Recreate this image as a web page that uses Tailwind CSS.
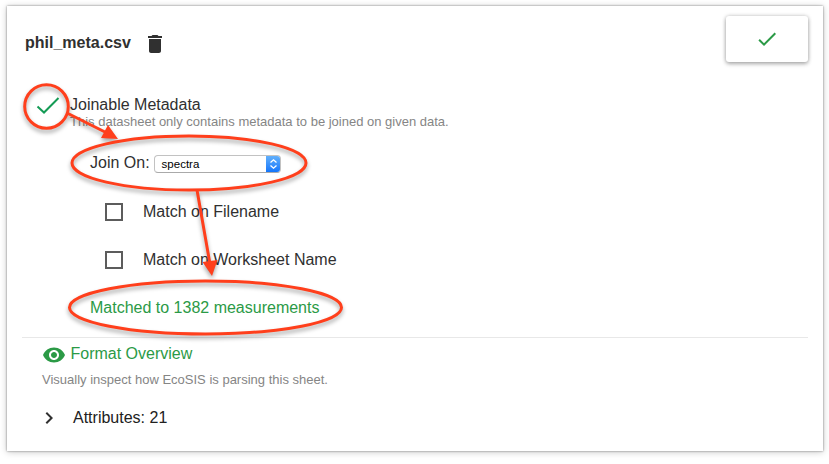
<!DOCTYPE html>
<html lang="en">
<head>
<meta charset="utf-8">
<title>phil_meta.csv</title>
<script src="https://cdn.jsdelivr.net/npm/@tailwindcss/browser@4"></script>
</head>
<body class="relative h-[464px] w-[829px] overflow-hidden bg-white px-[7px] pt-[6px] font-['Liberation_Sans',Arial,sans-serif] text-base text-[#303030]">
<main class="flex h-[445px] w-[816px] flex-col bg-white shadow-[0_0_2px_rgba(0,0,0,0.45),0_1px_7px_rgba(0,0,0,0.22)]">
  <header class="flex h-[87px] items-start pr-[15px] pl-[18px]">
    <h1 class="mt-[25px] text-base leading-6 font-bold">phil_meta.csv</h1>
    <svg class="mt-[26px] ml-[12px] size-6" viewBox="0 0 24 24" fill="#303030"><path d="M6 19c0 1.1.9 2 2 2h8c1.1 0 2-.9 2-2V7H6v12zM19 4h-3.500l-1-1h-5l-1 1H5v2h14V4z"/></svg>
    <button class="mt-[10px] ml-auto flex h-[46px] w-[82px] items-center justify-center rounded-[3px] bg-white shadow-[0_2px_4px_rgba(0,0,0,0.28),0_0_4px_rgba(0,0,0,0.2)]">
      <svg class="size-6" viewBox="0 0 24 24" fill="#2b9a46"><path d="M9 16.170L4.830 12l-1.420 1.410L9 19 21 7l-1.410-1.410z"/></svg>
    </button>
  </header>
  <section class="flex h-[44px] pl-[29px]">
    <svg class="mt-[1px] h-[24px] w-[24px]" viewBox="0 0 24 24" fill="none" stroke="#149b55" stroke-width="2"><path d="M1.500 12.500L8 18.500L22.500 4"/></svg>
    <div class="ml-[10px]">
      <h2 class="h-[22px] leading-[23px]">Joinable Metadata</h2>
      <p class="text-[13px] leading-[14px] text-[#858585]">This datasheet only contains metadata to be joined on given data.</p>
    </div>
  </section>
  <section class="flex h-[200px] flex-col pl-[83px]">
    <div class="mt-[14px] flex h-[24px] items-center">
      <span>Join On:</span>
      <div class="mt-[2px] ml-[4px] flex h-[18px] w-[127px] overflow-hidden rounded-[4px] border border-[#c2c2c2] border-b-[#aaa] bg-white text-[11.5px] leading-[17px] text-black">
        <span class="pl-[7px]">spectra</span>
        <span class="-my-px -mr-px ml-auto flex w-[15px] items-center justify-center bg-linear-to-b from-[#65b2fb] to-[#0871fa]"><svg class="h-[12px] w-[9px]" viewBox="0 0 9 12" fill="none" stroke="white" stroke-width="1.300"><path d="M1.500 4.500L4.500 1.800L7.500 4.500M1.500 7.500L4.500 10.200L7.500 7.500"/></svg></span>
      </div>
    </div>
    <label class="mt-[25px] flex h-[24px] items-center pl-[15px]"><span class="-mt-px size-[18px] border-2 border-[#5c5c5c]"></span><span class="ml-[20px]">Match on Filename</span></label>
    <label class="mt-[24px] flex h-[24px] items-center pl-[15px]"><span class="-mt-px size-[18px] border-2 border-[#5c5c5c]"></span><span class="ml-[20px]">Match on Worksheet Name</span></label>
    <p class="mt-[24px] leading-6 text-[#2b9a46]">Matched to 1382 measurements</p>
  </section>
  <section class="mr-[15px] ml-[15px] border-t border-[#e8e8e8] pl-[20px]">
    <h2 class="mt-[3px] flex h-[26px] items-center text-[#2b9a46]"><svg class="mt-[1px] size-6" viewBox="0 0 24 24" fill="#2b9a46"><path d="M12 4.500C7 4.500 2.730 7.610 1 12c1.730 4.390 6 7.500 11 7.500s9.270-3.110 11-7.500c-1.730-4.390-6-7.500-11-7.500zM12 17c-2.760 0-5-2.240-5-5s2.240-5 5-5 5 2.240 5 5-2.240 5-5 5zm0-8c-1.660 0-3 1.340-3 3s1.340 3 3 3 3-1.340 3-3-1.340-3-3-3z"/></svg><span class="ml-[4.500px]">Format Overview</span></h2>
    <p class="mt-[4px] h-[18px] text-[13px] leading-[18px] text-[#858585]">Visually inspect how EcoSIS is parsing this sheet.</p>
    <div class="mt-[17px] flex h-[24px] items-center"><svg class="-mt-px -ml-[5px] size-6" viewBox="0 0 24 24" fill="#303030"><path d="M10 6L8.590 7.410 13.170 12l-4.580 4.590L10 18l6-6z"/></svg><span class="ml-[12px] text-[#212121]">Attributes: 21</span></div>
  </section>
</main>
<svg class="pointer-events-none absolute top-0 left-0 h-[464px] w-[829px] drop-shadow-[0_3px_2px_rgba(0,0,0,0.35)]" viewBox="0 0 829 464" fill="none" stroke="#ff3f1c" stroke-width="3">
  <circle cx="46.500" cy="106.500" r="21.800"/>
  <ellipse cx="189" cy="163" rx="117" ry="27"/>
  <ellipse cx="205.500" cy="307.500" rx="136" ry="26.500"/>
  <path d="M67 113L107 133M197 190L210 264"/>
  <path fill="#ff3f1c" stroke="none" d="M118 139L101 138L108 125ZM212 276L202.500 262L217.500 260Z"/>
</svg>
</body>
</html>
